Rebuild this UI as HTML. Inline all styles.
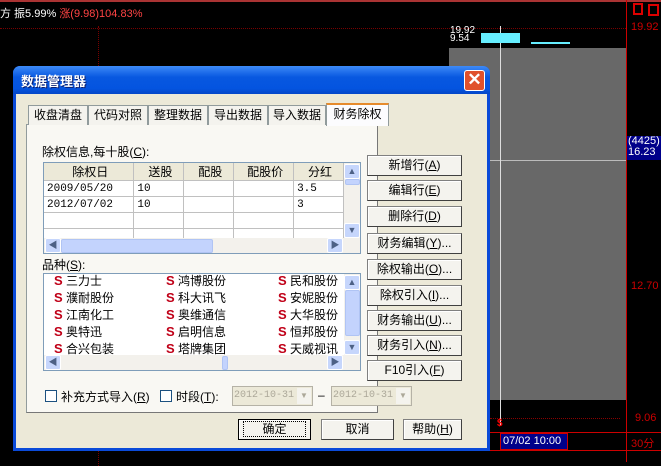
<!DOCTYPE html>
<html><head><meta charset="utf-8"><style>
*{box-sizing:border-box;margin:0;padding:0}
body{width:661px;height:462px;background:#000;position:relative;overflow:hidden;font-family:"Liberation Sans","Noto Sans CJK SC","WenQuanYi Zen Hei",sans-serif;font-size:12px;color:#000}
.a{position:absolute}
.rbtn{position:absolute;left:367px;width:95px;height:21px;background:#f4f3ee;border:1px solid #808080;border-right-color:#404040;border-bottom-color:#404040;box-shadow:inset 1px 1px 0 #fff;text-align:center;line-height:19px}
.tab{position:absolute;top:105px;height:20px;border:1px solid #919b9c;border-bottom:none;background:#f4f3ee;line-height:18px;text-align:center;font-size:12px}
.s{color:#c00018;font-weight:bold;font-size:13px;line-height:12px}
.sb{position:absolute;background:#c3d3fd;border:1px solid #b0c4f4;border-radius:2px}
.arrow{position:absolute;width:16px;height:15px;background:#c6d6fc;border:1px solid #fff;border-radius:2px;color:#4d6185;font-size:9px;text-align:center;line-height:13px}
td{border-right:1px solid #c0c0c0;border-bottom:1px solid #c0c0c0;height:16px;padding-left:3px;font-family:"Liberation Mono",monospace;font-size:11px}
.col{position:absolute;top:-1px;white-space:nowrap}
.col div{height:17px;line-height:17px;overflow:hidden}
</style></head><body>
<div class="a" style="left:0;top:0;width:661px;height:2px;background:#a33"></div>
<div class="a" style="left:0;top:5px;color:#fff;font-size:11px;white-space:nowrap">方 振5.99% <span style="color:#f44">涨(9.98)104.83%</span></div>
<div class="a" style="left:0;top:28px;width:626px;border-top:1px dotted #700"></div>
<div class="a" style="left:98px;top:26px;height:440px;border-left:1px dotted #700"></div>
<div class="a" style="left:449px;top:48px;width:177px;height:352px;background:#686868"></div>
<div class="a" style="left:449px;top:160px;width:177px;height:1px;background:#bbb"></div>
<div class="a" style="left:500px;top:26px;width:1px;height:400px;background:#ddd"></div>
<div class="a" style="left:450px;top:27px;color:#fff;font-size:10px;line-height:8px">19.92<br>9.54</div>
<div class="a" style="left:481px;top:33px;width:39px;height:10px;background:#6ef"></div>
<div class="a" style="left:531px;top:42px;width:39px;height:2px;background:#6ef"></div>
<div class="a" style="left:626px;top:0;width:1px;height:462px;background:#c00"></div>
<div class="a" style="left:631px;top:21px;color:#c00;font-size:11px">19.92</div>
<div class="a" style="left:633px;top:3px;width:10px;height:12px;border:2px solid #d00"></div>
<div class="a" style="left:648px;top:4px;width:11px;height:12px;border:2px solid #d00"></div>
<div class="a" style="left:627px;top:136px;width:34px;height:24px;background:#00008a;color:#fff;font-size:11px;line-height:11px;padding-left:1px">(4425)<br>16.23</div>
<div class="a" style="left:631px;top:280px;color:#c00;font-size:11px">12.70</div>
<div class="a" style="left:490px;top:418px;width:130px;border-top:1px dotted #800"></div>
<div class="a" style="left:635px;top:412px;color:#c00;font-size:11px">9.06</div>
<div class="a" style="left:490px;top:432px;width:171px;height:1px;background:#c00"></div>
<div class="a" style="left:490px;top:450px;width:171px;height:1px;background:#c00"></div>
<div class="a" style="left:500px;top:433px;width:68px;height:17px;background:#00008a;border:1px solid #c00;color:#fff;font-size:11px;line-height:15px;padding-left:2px">07/02 10:00</div>
<div class="a" style="left:631px;top:435px;color:#c00;font-size:11px">30分</div>
<div class="a" style="left:497px;top:418px;color:#f00;font-size:10px;font-weight:bold">$</div>
<!-- dialog -->
<div class="a" style="left:13px;top:66px;width:477px;height:385px;background:#0a4ad8;border-radius:7px 7px 0 0"></div>
<div class="a" style="left:13px;top:66px;width:477px;height:28px;background:linear-gradient(#3d8af7,#0858e0 40%,#0454e0 80%,#0446c8);border-radius:7px 7px 0 0"></div>
<div class="a" style="left:21px;top:71px;color:#fff;font-weight:bold;font-size:13px;text-shadow:1px 1px #0a1e6e">数据管理器</div>
<div class="a" style="left:464px;top:70px;width:21px;height:21px;background:#e0512c;border:1px solid #fff;border-radius:3px;color:#fff;font-size:17px;line-height:18px;text-align:center;font-weight:bold">✕</div>
<div class="a" style="left:16px;top:94px;width:471px;height:354px;background:#ece9d8"></div>
<div class="a" style="left:26px;top:124px;width:352px;height:289px;background:#f9f8f3;border:1px solid #919b9c;border-right-color:#777;border-bottom-color:#777"></div>
<div class="tab" style="left:28px;width:60px">收盘清盘</div>
<div class="tab" style="left:88px;width:60px">代码对照</div>
<div class="tab" style="left:148px;width:60px">整理数据</div>
<div class="tab" style="left:208px;width:60px">导出数据</div>
<div class="tab" style="left:268px;width:58px">导入数据</div>
<div class="tab" style="left:326px;top:103px;width:63px;height:23px;background:#fcfcfe;border-top:2px solid #e68b2c;border-bottom:none">财务除权</div>
<div class="a" style="left:42px;top:143px">除权信息,每十股(<u>C</u>):</div>
<div class="a" style="left:43px;top:162px;width:318px;height:92px;background:#fff;border:1px solid #7f9db9;overflow:hidden">
<table style="border-collapse:collapse;width:300px;position:absolute;left:0;top:0">
<tr style="background:#ece9d8"><td style="width:90px;text-align:center;font-family:inherit;font-size:12px">除权日</td><td style="width:50px;text-align:center;font-family:inherit;font-size:12px">送股</td><td style="width:50px;text-align:center;font-family:inherit;font-size:12px">配股</td><td style="width:60px;text-align:center;font-family:inherit;font-size:12px">配股价</td><td style="width:50px;text-align:center;font-family:inherit;font-size:12px">分红</td></tr>
<tr><td>2009/05/20</td><td>10</td><td></td><td></td><td>3.5</td></tr>
<tr><td>2012/07/02</td><td>10</td><td></td><td></td><td>3</td></tr>
<tr><td></td><td></td><td></td><td></td><td></td></tr>
<tr><td></td><td></td><td></td><td></td><td></td></tr>
</table>
<div class="a" style="left:300px;top:0;width:16px;height:90px;background:#f3f1ec"></div>
<div class="arrow" style="left:300px;top:1px">▲</div>
<div class="arrow" style="left:300px;top:60px">▼</div>
<div class="sb" style="left:301px;top:16px;width:15px;height:6px"></div>
<div class="a" style="left:0;top:75px;width:316px;height:16px;background:#f3f1ec"></div>
<div class="arrow" style="left:1px;top:75px">◀</div>
<div class="arrow" style="left:283px;top:75px">▶</div>
<div class="sb" style="left:17px;top:76px;width:152px;height:14px"></div>
</div>
<div class="a" style="left:42px;top:256px">品种(<u>S</u>):</div>
<div class="a" style="left:43px;top:273px;width:318px;height:98px;background:#fff;border:1px solid #7f9db9;overflow:hidden">
<div class="col" style="left:10px"><div><span class="s">S</span> 三力士</div><div><span class="s">S</span> 濮耐股份</div><div><span class="s">S</span> 江南化工</div><div><span class="s">S</span> 奥特迅</div><div><span class="s">S</span> 合兴包装</div></div>
<div class="col" style="left:122px"><div><span class="s">S</span> 鸿博股份</div><div><span class="s">S</span> 科大讯飞</div><div><span class="s">S</span> 奥维通信</div><div><span class="s">S</span> 启明信息</div><div><span class="s">S</span> 塔牌集团</div></div>
<div class="col" style="left:234px"><div><span class="s">S</span> 民和股份</div><div><span class="s">S</span> 安妮股份</div><div><span class="s">S</span> 大华股份</div><div><span class="s">S</span> 恒邦股份</div><div><span class="s">S</span> 天威视讯</div></div>
<div class="a" style="left:300px;top:0;width:16px;height:82px;background:#f3f1ec"></div>
<div class="arrow" style="left:300px;top:1px">▲</div>
<div class="arrow" style="left:300px;top:66px">▼</div>
<div class="sb" style="left:301px;top:16px;width:15px;height:46px"></div>
<div class="a" style="left:0;top:81px;width:316px;height:16px;background:#f3f1ec"></div>
<div class="arrow" style="left:1px;top:81px">◀</div>
<div class="arrow" style="left:283px;top:81px">▶</div>
<div class="sb" style="left:178px;top:82px;width:6px;height:14px"></div>
</div>
<div class="rbtn" style="top:155px">新增行(<u>A</u>)</div>
<div class="rbtn" style="top:180px">编辑行(<u>E</u>)</div>
<div class="rbtn" style="top:206px">删除行(<u>D</u>)</div>
<div class="rbtn" style="top:233px">财务编辑(<u>Y</u>)...</div>
<div class="rbtn" style="top:259px">除权输出(<u>O</u>)...</div>
<div class="rbtn" style="top:285px">除权引入(<u>I</u>)...</div>
<div class="rbtn" style="top:310px">财务输出(<u>U</u>)...</div>
<div class="rbtn" style="top:335px">财务引入(<u>N</u>)...</div>
<div class="rbtn" style="top:360px">F10引入(<u>F</u>)</div>
<div class="a" style="left:45px;top:390px;width:12px;height:12px;background:#fff;border:1px solid #1c5180"></div>
<div class="a" style="left:61px;top:388px">补充方式导入(<u>R</u>)</div>
<div class="a" style="left:160px;top:390px;width:12px;height:12px;background:#fff;border:1px solid #1c5180"></div>
<div class="a" style="left:176px;top:388px">时段(<u>T</u>):</div>
<div class="a" style="left:232px;top:386px;width:81px;height:20px;background:#ece9d8;border:1px solid #b5b2a6;color:#aca899;font-family:'Liberation Mono',monospace;font-size:10px;line-height:18px;padding-left:1px;overflow:hidden;white-space:nowrap">2012-10-31</div>
<div class="a" style="left:297px;top:388px;width:14px;height:16px;background:#f4f3ee;color:#aca899;font-size:8px;text-align:center;line-height:16px">▼</div>
<div class="a" style="left:318px;top:388px">–</div>
<div class="a" style="left:331px;top:386px;width:81px;height:20px;background:#ece9d8;border:1px solid #b5b2a6;color:#aca899;font-family:'Liberation Mono',monospace;font-size:10px;line-height:18px;padding-left:1px;overflow:hidden;white-space:nowrap">2012-10-31</div>
<div class="a" style="left:396px;top:388px;width:14px;height:16px;background:#f4f3ee;color:#aca899;font-size:8px;text-align:center;line-height:16px">▼</div>
<div class="rbtn" style="left:238px;top:419px;width:73px;border:1px solid #000"><span style="border:1px dotted #000;padding:0 18px">确定</span></div>
<div class="rbtn" style="left:321px;top:419px;width:73px">取消</div>
<div class="rbtn" style="left:403px;top:419px;width:59px">帮助(<u>H</u>)</div>
</body></html>
